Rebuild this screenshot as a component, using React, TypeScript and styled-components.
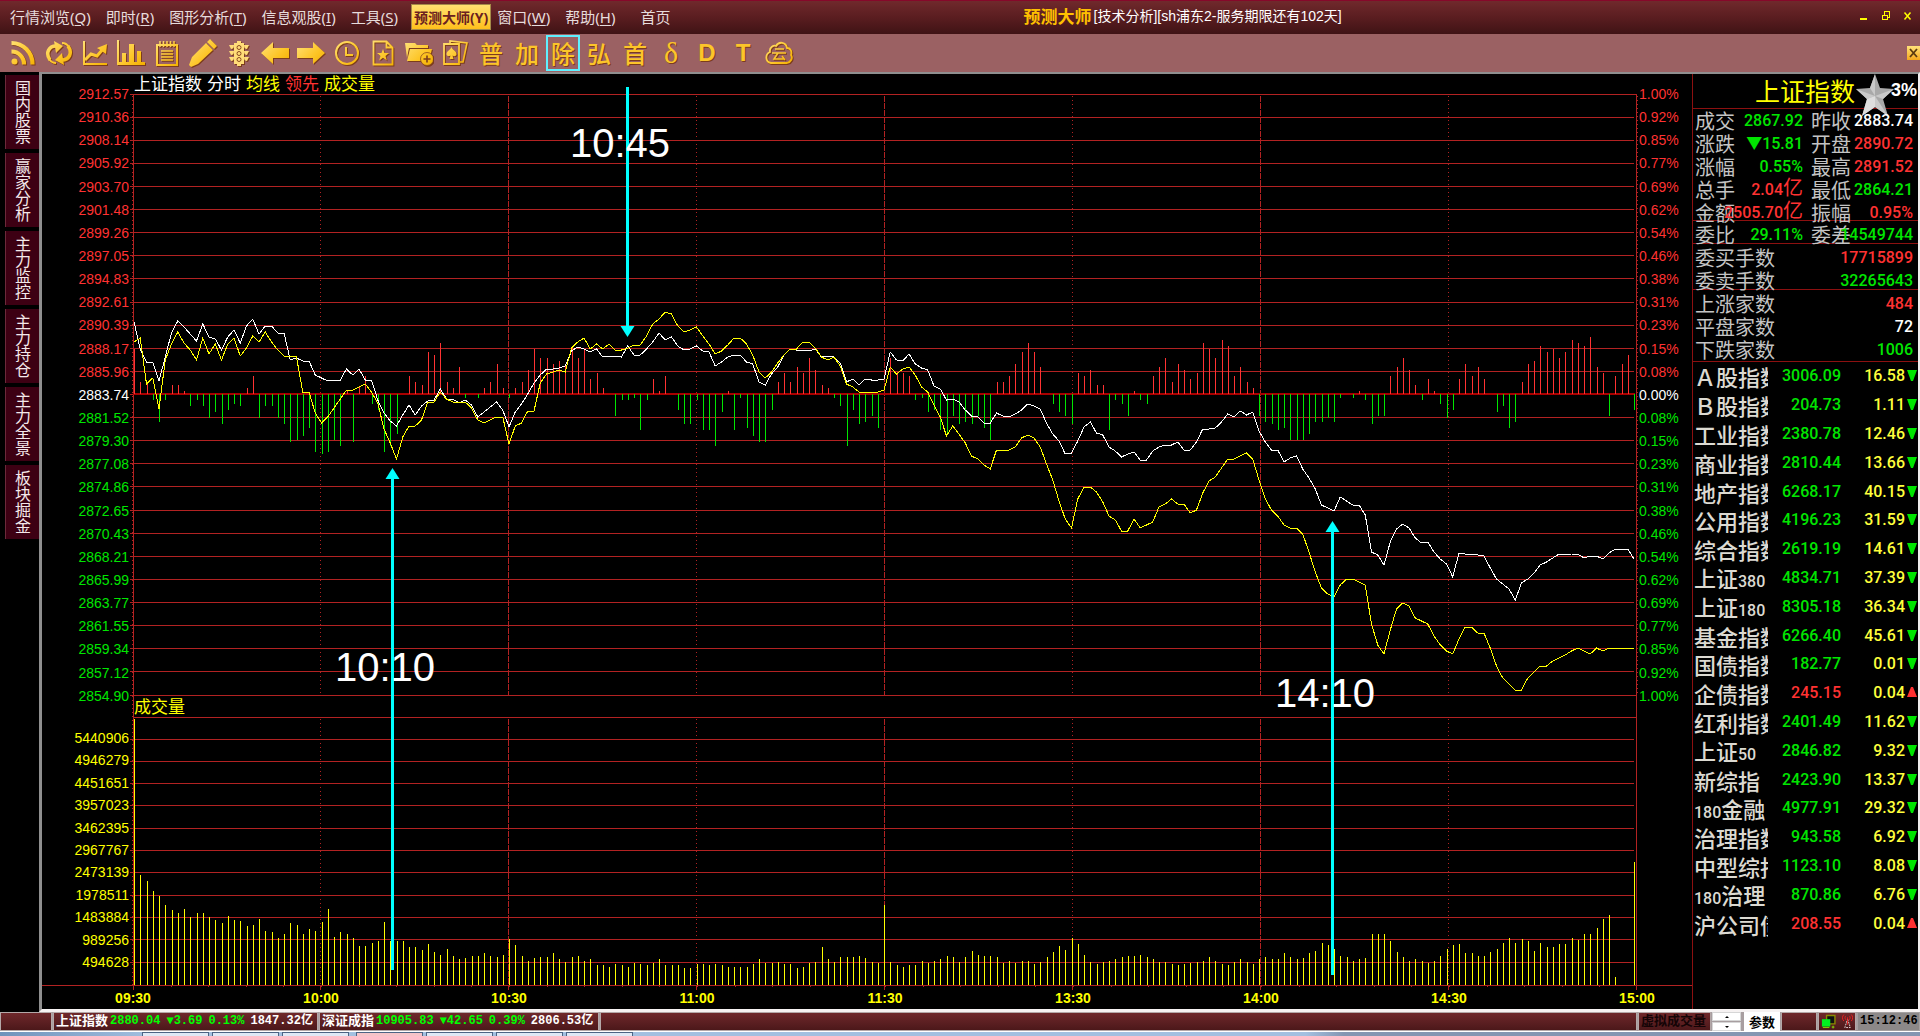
import React from 'react';
import styled, { createGlobalStyle, css } from 'styled-components';

const SANS = `"Liberation Sans", "Noto Sans CJK SC", sans-serif`;
const CJK = `"Noto Sans CJK SC", sans-serif`;
const NUM = `Roboto, "Noto Sans CJK SC", sans-serif`;
const MONO = `"Liberation Mono", "Noto Sans CJK SC", monospace`;

const RED = '#ff3232';
const GREEN = '#00e600';
const GRID = '#b22222';
const FRAME = '#8c1010';

const GlobalStyle = createGlobalStyle`
  * { box-sizing: border-box; }
  body { margin: 0; background: #000; overflow: hidden; }
  button { font: inherit; color: inherit; background: none; border: 0; padding: 0; cursor: pointer; }
  dl, dd, dt, ul, h1, h2 { margin: 0; padding: 0; font-weight: inherit; font-size: inherit; }
`;

/* ---------- data ---------- */

const OPEN_X = 134;
const STEP = 6.25;
const ZERO_Y = 394;
const PRICE_TOP = 94;
const PRICE_BOTTOM = 695;
const VOL_TOP = 717;
const VOL_BASE = 985;

const indexY = [
  322,349,362,362,381,357,333,321,327,334,341,324,337,339,350,337,330,343,326,319,334,326,326,333,333,360,358,361,361,375,
  378,381,380,380,369,375,369,380,380,400,413,421,426,415,405,415,406,401,400,389,399,399,403,400,405,417,412,407,402,410,
  427,412,404,394,383,375,369,369,368,366,351,347,349,352,349,357,356,356,357,346,355,355,349,342,333,340,337,346,350,349,
  346,351,352,366,362,357,355,355,362,364,382,385,374,367,355,349,350,350,351,349,357,356,357,363,382,379,385,379,380,380,
  379,352,360,361,354,364,368,370,386,389,400,399,402,410,416,417,423,423,413,416,417,414,410,404,406,409,423,434,441,454,
  453,441,427,422,433,435,447,451,457,454,452,460,460,451,447,445,445,442,450,450,442,429,429,428,422,414,417,411,415,412,
  431,442,450,450,462,458,456,469,478,489,505,508,511,497,501,505,505,515,552,555,565,542,529,524,528,538,543,542,552,559,
  564,577,553,554,554,555,556,568,579,584,589,600,583,579,573,565,562,558,554,555,554,554,558,556,556,559,553,549,549,549,559,
];

const leadY = [
  342,338,384,378,409,360,344,332,343,350,360,338,354,344,360,344,338,356,348,336,342,332,342,350,356,356,357,392,392,413,
  423,417,408,399,390,390,387,384,392,403,429,443,459,437,426,426,420,402,402,392,399,402,402,402,408,420,423,420,417,417,
  444,426,423,411,411,383,374,372,370,372,348,342,338,349,344,349,344,350,350,348,345,345,336,324,319,312,314,326,332,330,
  327,336,344,354,351,345,338,338,344,355,372,378,372,363,355,349,349,342,342,348,357,360,357,366,384,387,392,392,392,392,
  390,367,374,369,367,375,387,392,405,417,436,426,434,443,456,459,465,469,450,450,450,447,438,435,438,447,464,480,501,519,
  528,499,487,487,492,502,516,520,531,531,519,528,525,522,507,504,499,504,504,513,510,493,481,477,468,459,459,456,453,459,
  480,499,510,516,525,528,528,534,552,572,588,594,597,585,579,579,582,585,624,645,654,630,609,603,606,618,621,624,636,645,
  651,654,639,627,627,633,633,648,666,678,684,690,690,678,672,666,666,661,658,655,651,648,651,654,648,651,648,648,648,648,648,
];

const momentum = [
  45,12,11,-6,-28,-6,9,9,3,-12,-6,-12,-24,-18,-30,-16,-10,-12,6,18,-24,-12,-12,-24,-30,-48,-46,-42,-34,-58,
  -60,-58,-46,-52,3,-48,7,18,-10,-16,-58,-52,-40,0,18,12,9,42,39,51,12,6,27,-4,0,-4,6,12,30,6,
  -4,6,12,24,45,36,36,30,33,29,48,36,45,15,21,6,0,-22,-6,-6,-4,-36,-6,15,3,18,0,-16,-30,-30,
  -6,-36,-36,-52,-18,3,-36,-4,-34,-42,-48,-48,-16,12,21,12,27,21,36,24,9,6,-4,-12,-52,-16,-30,-28,-22,-34,
  0,36,22,21,18,-6,-4,-18,-16,-36,-40,-22,-30,-28,-30,-22,-34,-46,12,12,18,30,42,51,42,27,0,-10,-18,-22,
  -30,21,18,24,9,9,-36,-6,-10,-22,3,-6,-10,18,27,36,12,30,24,15,21,51,45,36,54,48,18,27,12,6,
  -22,-28,-30,-36,-34,-46,-46,-46,-40,-28,-28,-24,-28,-4,0,-4,3,-6,-30,-22,-22,18,27,36,24,9,-6,15,3,-10,
  -24,-16,15,30,18,27,15,0,-18,-12,-34,-28,12,30,33,48,42,45,36,42,54,51,48,57,27,21,-22,18,30,39,-16,
];

const volume = [
  266,110,104,94,89,80,75,72,76,68,72,72,68,65,62,69,65,64,59,60,66,54,53,47,51,62,60,51,56,54,
  63,76,48,53,51,47,39,39,42,44,63,44,44,44,38,38,35,41,33,30,36,29,26,27,29,29,32,29,28,30,
  46,40,29,24,27,28,28,32,26,23,28,29,24,26,20,20,18,21,20,18,22,21,20,22,26,20,20,20,17,17,
  21,21,20,21,20,18,18,18,18,21,26,22,22,23,21,21,17,18,22,23,38,26,23,28,28,28,29,27,23,22,
  80,23,20,18,20,20,24,22,24,26,29,28,23,28,34,30,29,29,28,22,24,22,24,24,21,23,28,33,39,35,
  47,41,30,23,21,23,24,26,28,29,29,30,28,26,23,23,21,20,21,22,23,24,28,24,21,20,23,26,23,21,
  26,28,26,26,32,28,26,27,32,34,42,40,36,29,28,24,26,27,51,51,51,44,33,28,24,26,24,22,24,29,
  36,40,41,32,32,29,29,33,36,42,47,42,46,44,34,42,38,38,41,41,47,45,51,51,57,66,70,8,0,0,123,
];

const prices = ['2912.57','2910.36','2908.14','2905.92','2903.70','2901.48','2899.26','2897.05','2894.83','2892.61','2890.39','2888.17','2885.96','2883.74','2881.52','2879.30','2877.08','2874.86','2872.65','2870.43','2868.21','2865.99','2863.77','2861.55','2859.34','2857.12','2854.90'];
const percents = ['1.00%','0.92%','0.85%','0.77%','0.69%','0.62%','0.54%','0.46%','0.38%','0.31%','0.23%','0.15%','0.08%','0.00%','0.08%','0.15%','0.23%','0.31%','0.38%','0.46%','0.54%','0.62%','0.69%','0.77%','0.85%','0.92%','1.00%'];
const volumes = ['5440906','4946279','4451651','3957023','3462395','2967767','2473139','1978511','1483884','989256','494628'];
const times = ['09:30','10:00','10:30','11:00','11:30','13:30','14:00','14:30','15:00'];

const notes = [
  { text: '10:45', x: 620, y: 143, arrowX: 627, tail: 87, tip: 337, dir: -1 },
  { text: '10:10', x: 385, y: 667, arrowX: 392, tail: 970, tip: 468, dir: 1 },
  { text: '14:10', x: 1325, y: 693, arrowX: 1332, tail: 975, tip: 521, dir: 1 },
];

type Tone = 'up' | 'down' | 'flat';
const toneColor: Record<Tone, string> = { up: RED, down: GREEN, flat: '#fff' };

type Quote = [label: string, value: string, tone: Tone];
const stats: Quote[][][] = [
  [
    [['成交', '2867.92', 'down'], ['昨收', '2883.74', 'flat']],
    [['涨跌', '▼15.81', 'down'], ['开盘', '2890.72', 'up']],
    [['涨幅', '0.55%', 'down'], ['最高', '2891.52', 'up']],
    [['总手', '2.04亿', 'up'], ['最低', '2864.21', 'down']],
    [['金额', '2505.70亿', 'up'], ['振幅', '0.95%', 'up']],
  ],
  [[['委比', '29.11%', 'down'], ['委差', '14549744', 'down']]],
  [[['委买手数', '17715899', 'up']], [['委卖手数', '32265643', 'down']]],
  [[['上涨家数', '484', 'up']], [['平盘家数', '72', 'flat']], [['下跌家数', '1006', 'down']]],
];

const indices: [string, string, string, boolean][] = [
  ['Ａ股指数', '3006.09', '16.58', false],
  ['Ｂ股指数', '204.73', '1.11', false],
  ['工业指数', '2380.78', '12.46', false],
  ['商业指数', '2810.44', '13.66', false],
  ['地产指数', '6268.17', '40.15', false],
  ['公用指数', '4196.23', '31.59', false],
  ['综合指数', '2619.19', '14.61', false],
  ['上证380', '4834.71', '37.39', false],
  ['上证180', '8305.18', '36.34', false],
  ['基金指数', '6266.40', '45.61', false],
  ['国债指数', '182.77', '0.01', false],
  ['企债指数', '245.15', '0.04', true],
  ['红利指数', '2401.49', '11.62', false],
  ['上证50', '2846.82', '9.32', false],
  ['新综指', '2423.90', '13.37', false],
  ['180金融', '4977.91', '29.32', false],
  ['治理指数', '943.58', '6.92', false],
  ['中型综指', '1123.10', '8.08', false],
  ['180治理', '870.86', '6.76', false],
  ['沪公司债', '208.55', '0.04', true],
];

/* ---------- title bar ---------- */

const Screen = styled.div`
  display: flex;
  flex-direction: column;
  height: 100vh;
  background: #000;
  font-family: ${SANS};
  color: #fff;
`;

const TitleBar = styled.header`
  display: grid;
  grid-template-columns: minmax(700px, 8fr) 7fr;
  align-items: center;
  flex: none;
  height: 34px;
  padding: 0 6px 4px;
  border-top: 1px solid #86082a;
  background: linear-gradient(#70292c, #5a1d20 50%, #3f1315);
`;

const Menu = styled.nav`
  display: flex;
  align-items: center;
  gap: 7px;
  padding-top: 2px;
  font-size: 15px;
  font-family: "Noto Sans", ${CJK};
  font-weight: 400;
  color: #e6dcdc;
`;

const MenuItem = styled.button<{ $active?: boolean; $apart?: boolean }>`
  height: 26px;
  padding: 0 4px;
  white-space: nowrap;
  ${p => p.$apart && css`margin-left: 10px;`}
  ${p => p.$active && css`
    margin: 0 -5px 0 2px;
    padding: 0 2px;
    border: 1px solid #a48a48;
    background: linear-gradient(#ffe070, #ffc01c);
    color: #6a2020;
    font-size: 14px;
    font-weight: 700;
  `}
`;

const AccessKey = styled.span`
  text-decoration: underline;
  text-underline-offset: 2px;
`;

const TitleSide = styled.div`
  display: flex;
  justify-content: space-between;
  align-items: center;
`;

const WindowTitle = styled.h1`
  display: flex;
  align-items: center;
  white-space: nowrap;
  font: 400 14px/20px ${SANS};
`;

const Brand = styled.span`
  font: 700 17px/20px ${CJK};
  color: #ffc000;
  margin-right: 2px;
`;

const WindowButtons = styled.div`
  display: flex;
  justify-content: flex-end;
  gap: 10px;
`;

const WindowButton = styled.button`
  width: 12px;
  height: 12px;
  display: grid;
  place-items: center;
`;

/* ---------- toolbar ---------- */

const Toolbar = styled.div`
  display: flex;
  align-items: center;
  flex: none;
  height: 38px;
  padding-left: 5px;
  background: #9b6163;
`;

const Tool = styled.button<{ $active?: boolean }>`
  display: grid;
  place-items: center;
  width: 36px;
  height: 36px;
  font: 500 24px/34px ${CJK};
  color: #fcc52a;
  text-shadow: 1px 1px 0 #7c3c1c;
  svg { filter: drop-shadow(1px 1px 0 #7c3c1c); }
  ${p => p.$active && css`
    width: 34px;
    margin: 0 1px;
    border: 2px solid #5ff0ff;
    line-height: 30px;
  `}
`;

const LatinTool = styled(Tool)`
  font: 700 24px/34px ${SANS};
`;

const GreekTool = styled(Tool)`
  font: 400 30px/34px "Liberation Serif", serif;
`;

const PanelClose = styled.button`
  margin-left: auto;
  width: 13px;
  height: 14px;
  background: linear-gradient(#ffe27a, #f5a81c);
  display: grid;
  place-items: center;
`;

/* ---------- body ---------- */

const Body = styled.main`
  display: flex;
  flex: 1;
  min-height: 0;
`;

const Sidebar = styled.nav`
  display: flex;
  flex-direction: column;
  gap: 4px;
  flex: none;
  width: 39px;
  padding: 3px 0 0 5px;
`;

const SideTab = styled.button`
  height: 74px;
  border-left: 1px solid #6b2a3a;
  background: #3d0013;
  writing-mode: vertical-rl;
  text-align: center;
  font: 400 16px/33px ${CJK};
  color: #f4e8ea;
`;

const Panels = styled.div`
  display: flex;
  flex: 1;
  min-width: 0;
  border-style: solid;
  border-width: 2px 2px 3px 3px;
  border-color: #8f8f8f #f0eeee #f6f2f2 #8f8f8f;
`;

const Chart = styled.section`
  position: relative;
  flex: 1;
  min-width: 0;
  display: grid;
  grid-template-columns: minmax(0, 91fr) minmax(0, 1504fr) minmax(0, 55fr);
  grid-template-rows: minmax(0, 20fr) minmax(0, 602fr) minmax(0, 21fr) minmax(0, 268fr) minmax(0, 24fr);
  font-size: 14px;
  line-height: 14px;
`;

const Plot = styled.svg`
  grid-area: 1 / 1 / -1 / -1;
  width: 100%;
  height: 100%;
  display: block;
`;

const Legend = styled.h2`
  grid-area: 1 / 2;
  display: flex;
  gap: 5px;
  padding-left: 1px;
  font: 400 17px/18px ${CJK};
`;

const VolumeTitle = styled.h2`
  grid-area: 3 / 2;
  padding-left: 1px;
  font: 400 17px/19px ${CJK};
  color: #ffff00;
`;

const Tint = styled.span<{ $color: string }>`
  color: ${p => p.$color};
`;

const Scale = styled.ul<{ $side: 'left' | 'right' }>`
  grid-area: 2 / ${p => (p.$side === 'left' ? 1 : 3)};
  display: flex;
  flex-direction: column;
  justify-content: space-between;
  margin: -7px 0;
  list-style: none;
  ${p => (p.$side === 'left' ? css`text-align: right; padding-right: 4px;` : css`padding-left: 2px;`)}
`;

const VolumeScale = styled(Scale)`
  grid-area: 4 / 1;
  margin: 0;
  padding: 14px 4px 16px 0;
  color: #ffff00;
`;

const TimeAxis = styled.ul`
  grid-area: 5 / 2;
  display: flex;
  justify-content: space-between;
  align-items: center;
  margin: 0 -18px;
  padding-top: 2px;
  list-style: none;
  font-weight: 700;
  color: #ffff00;
`;

const TimeMark = styled.li`
  width: 36px;
  text-align: center;
`;

const Note = styled.span`
  position: absolute;
  transform: translate(-50%, -50%);
  font-size: 40px;
  line-height: 40px;
`;

/* ---------- quote panel ---------- */

const QuotePanel = styled.aside`
  flex: none;
  width: 226px;
  border-left: 1px solid ${FRAME};
`;

const QuoteHead = styled.header`
  display: flex;
  justify-content: flex-end;
  height: 35px;
  padding-right: 1px;
  border-bottom: 1px solid ${FRAME};
`;

const QuoteName = styled.h2`
  font: 400 25px/33px ${CJK};
  color: #ffff00;
`;

const QuotePercent = styled.strong`
  margin-left: -4px;
  font-size: 18px;
  line-height: 32px;
`;

const StatGroup = styled.dl<{ $first?: boolean }>`
  padding-top: ${p => (p.$first ? 0 : 2)}px;
  border-bottom: 1px solid ${FRAME};
  &:last-of-type { padding-bottom: 3px; }
`;

const StatRows = styled.div<{ $first?: boolean }>`
  margin-bottom: ${p => (p.$first ? -4 : -3)}px;
`;

const StatRow = styled.div`
  display: flex;
  justify-content: space-between;
  height: 23px;
  padding: 0 5px 0 2px;
`;

const Stat = styled.div<{ $wide?: boolean; $second?: boolean }>`
  display: grid;
  width: ${p => (p.$wide ? '100%' : p.$second ? '102px' : '108px')};
  align-items: center;
`;

const StatLabel = styled.dt`
  grid-area: 1 / 1;
  font: 400 20px/22px ${CJK};
  color: #c4c4c4;
`;

const StatValue = styled.dd<{ $tone: Tone }>`
  grid-area: 1 / 1;
  justify-self: end;
  font: 500 16px/23px ${NUM};
  color: ${p => toneColor[p.$tone]};
`;

const Unit = styled.span`
  font-size: 20px;
  line-height: 20px;
  font-weight: 400;
`;

const IndexTable = styled.table`
  width: 100%;
  height: 576px;
  table-layout: fixed;
  border-collapse: collapse;
  font: 500 16px/24px ${NUM};
`;

const IndexRow = styled.tr`
  height: 5%;
`;

const NameCell = styled.th`
  width: 75px;
  padding: 0 0 0 1px;
  overflow: hidden;
  white-space: nowrap;
  text-align: left;
  font: 500 22px/24px ${CJK};
  color: #dcdad2;
`;

const NameDigits = styled.span`
  font: 500 16px/16px ${NUM};
`;

const NumberCell = styled.td<{ $color: string; $width: number }>`
  width: ${p => p.$width}px;
  padding: 0;
  text-align: right;
  color: ${p => p.$color};
`;

const MarkCell = styled.td`
  padding: 0 0 0 2px;
  svg { display: block; }
`;

/* ---------- status bar ---------- */

const StatusBar = styled.footer`
  display: flex;
  flex: none;
  height: 19px;
  gap: 1px;
  background: #a89ea0;
  font: 700 12px/17px ${MONO};
`;

const StatusCell = styled.div<{ $width?: number }>`
  display: flex;
  align-items: center;
  gap: 6px;
  flex: ${p => (p.$width ? `0 0 ${p.$width}px` : '1 1 0')};
  padding: 0 2px;
  border: 1px solid #b4a8a8;
  background: linear-gradient(#6f282b, #4c181a);
  white-space: nowrap;
  overflow: hidden;
`;

const StatusName = styled.span`
  font-size: 13px;
  margin-right: -4px;
`;

const VirtualVolume = styled(StatusCell)`
  color: #140406;
  font-size: 13px;
`;

const Spinner = styled.div`
  display: flex;
  flex-direction: column;
  gap: 1px;
  width: 29px;
`;

const SpinButton = styled.button`
  flex: 1;
  display: grid;
  place-items: center;
  background: #fff;
  border: 1px solid #d6d6d6;
`;

const ParamButton = styled.button`
  width: 36px;
  margin-left: 2px;
  background: #fff;
  color: #000;
  font: 700 13px/17px ${CJK};
`;

const Clock = styled.time`
  width: 63px;
  padding-left: 2px;
  border: 1px solid #a4a0a0;
  background: #8c8888;
  color: #000;
`;

const Taskbar = styled.div`
  display: flex;
  gap: 3px;
  flex: none;
  height: 5px;
  padding-left: 142px;
  border-top: 1px solid #fff;
  background: linear-gradient(90deg, #6f93bb, #a3c0e0 8%, #a3c0e0 68%, #8496b2 70%, #8496b2);
`;

const TaskTab = styled.span<{ $hot?: boolean; $gap?: boolean }>`
  width: 67px;
  margin-left: ${p => (p.$gap ? 4 : 0)}px;
  border: 1px solid #4c6484;
  border-bottom: 0;
  background: ${p => (p.$hot ? '#f6c4c8' : '#dfe9f6')};
`;

/* ---------- drawings ---------- */

const HiddenDefs = styled.svg`
  position: absolute;
`;

const Gold = () => (
  <HiddenDefs width="0" height="0" aria-hidden="true">
    <defs>
      <linearGradient id="gold" x1="0" y1="0" x2="26" y2="26" gradientUnits="userSpaceOnUse">
        <stop offset="0" stopColor="#ffe27a" />
        <stop offset=".6" stopColor="#fdc526" />
        <stop offset="1" stopColor="#f2ae00" />
      </linearGradient>
    </defs>
  </HiddenDefs>
);

const G = 'url(#gold)';

const icons: [string, React.ReactNode][] = [
  ['资讯', <>
    <circle cx="4.5" cy="21.5" r="3" fill={G} />
    <path d="M1.5 11.5A12.5 12.5 0 0 1 14 24.500M1.500 3A21 21 0 0 1 22.500 24.500" fill="none" stroke={G} strokeWidth="4.200" />
  </>],
  ['刷新', <>
    <path d="M4 20C-1 13 3 6 10 6M22 6c5 7 1 14-6 14" fill="none" stroke={G} strokeWidth="3.500" />
    <path d="M8 1l9 5-7 7zM18 25l-9-5 7-7z" fill={G} />
    <path d="M16 3c3 0 5 1 7 4M10 23c-3 0-5-1-7-4" fill="none" stroke={G} strokeWidth="2" />
  </>],
  ['走势', <>
    <path d="M2 1v23h23" fill="none" stroke={G} strokeWidth="2" />
    <path d="M3 20l6-6 6 2 6-7" fill="none" stroke={G} strokeWidth="3" />
    <path d="M25 4l-1 10-9-6z" fill={G} />
  </>],
  ['柱图', <path d="M-1 0h2v22h3v-9h4v9h3V4h5v18h3V11h4v11h4v3H-1z" fill={G} />],
  ['记事', <>
    <path d="M3 5h20v20H3z" fill="none" stroke={G} strokeWidth="2" />
    <path d="M6 1v6M9.500 1v6M13 1v6M16.500 1v6M20 1v6M7 11h12M7 14h12M7 17h12M7 20h12" stroke={G} strokeWidth="1.500" />
  </>],
  ['画线', <path d="M17 2l3-3 7 7-3 3zM16 3l7 7L8 24l-7 3-2-2 3-8z" fill={G} />],
  ['信号', <>
    <path d="M8 3h10v21H8zM11 1h4v2h-4zM11 24h4v2h-4zM3 5h5c0 3-1 4-3 4zM3 11h5c0 3-1 4-3 4zM3 17h5c0 3-1 4-3 4zM23 5h-5c0 3 1 4 3 4zM23 11h-5c0 3 1 4 3 4zM23 17h-5c0 3 1 4 3 4z" fill="#ffdc78" />
    <circle cx="13" cy="7.500" r="2" fill="none" stroke="#8a4a20" />
    <circle cx="13" cy="13.500" r="2" fill="none" stroke="#8a4a20" />
    <circle cx="13" cy="19.500" r="2" fill="none" stroke="#8a4a20" />
  </>],
  ['后退', <path d="M-1 13L11 2v6h16v10H11v6z" fill={G} />],
  ['前进', <path d="M27 13L15 2v6H-1v10h16v6z" fill={G} />],
  ['周期', <>
    <circle cx="13" cy="13" r="11" fill="none" stroke={G} strokeWidth="2" />
    <path d="M12 7v8h7" fill="none" stroke={G} strokeWidth="2" />
  </>],
  ['自选', <>
    <path d="M3.500 1.500h13l6 6v17h-19zM16.500 1.500v6h6" fill="none" stroke={G} strokeWidth="1.800" />
    <path d="M13 9l1.500 4h4.500l-3.500 3 1.300 4.500-3.800-2.700-3.800 2.700 1.300-4.500L7 13h4.500z" fill={G} />
  </>],
  ['板块', <>
    <path d="M-1 3h10l2 2h11v3H3L1 18z" fill={G} />
    <path d="M4 9h22l-3 12H1z" fill={G} />
    <circle cx="21" cy="19" r="6.500" fill={G} stroke="#8a4a20" strokeWidth=".8" />
    <path d="M21 15.500v7M17.500 19h7" stroke="#7c3c1c" strokeWidth="1.600" />
  </>],
  ['牌组', <>
    <path d="M8 3V1l17 2-4 19h-3" fill="none" stroke={G} strokeWidth="1.600" />
    <path d="M2 4h15v20H2z" fill="none" stroke={G} strokeWidth="1.800" />
    <path d="M9.500 7c1 3 5 4 5 7 0 2-2 3-4 1.500l1 3.500H7.500l1-3.500C6.500 17 4.500 16 4.500 14c0-3 4-4 5-7z" fill={G} />
  </>],
];

const CloudIcon = () => (
  <svg width="28" height="26" viewBox="0 0 28 26" aria-hidden="true">
    <path d="M6 23c-6-1-6-9-1-11-1-5 4-7 6-6 3-5 10-4 11 2 4 0 5 4 4 7 2 3 0 7-4 8z" fill="none" stroke={G} strokeWidth="1.800" />
    <path d="M10 9h9M7 13h14M13 13l-4 6h10M17 16l3 4" fill="none" stroke={G} strokeWidth="1.500" />
  </svg>
);

const StarIcon = () => (
  <svg width="40" height="42" viewBox="0 0 40 42" aria-hidden="true">
    <path d="M20 0l5 14 14 1-11 10 5 17-13-9-13 9 5-17L1 15l14-1z" fill="#a9a9a9" />
    <path d="M20 0v22L15 14zM39 15L20 22l8 3zM33 42L20 22v11zM1 15l19 7-8 3z" fill="#c9c9c9" />
    <path d="M20 22l-8 3-5 17 13-9z" fill="#dedede" />
  </svg>
);

const polyline = (ys: number[]) => ys.map((y, i) => `${OPEN_X + i * STEP},${y}`).join(' ');
const bars = (list: number[], keep: (v: number) => boolean, base: number) =>
  list.map((v, i) => (keep(v) ? `M${Math.round(OPEN_X + i * STEP) + 0.5} ${base}V${base - v}` : '')).join('');

const rowY = (i: number) => Math.floor(PRICE_TOP + (i * (PRICE_BOTTOM - PRICE_TOP)) / 26) + 0.5;
const volY = (i: number) => Math.floor(739 + i * 22.3) + 0.5;
const timeX = (i: number) => Math.floor(133 + i * 187.9) + 0.5;

function PlotArea() {
  const rows = prices.map((_, i) => `M130 ${rowY(i)}H${i === 0 || i === 26 ? 1636 : 1634}`).join('');
  const volRows = volumes.map((_, i) => `M130 ${volY(i)}H1634`).join('');
  const column = (i: number) => `M${timeX(i)} 96V695M${timeX(i)} 719V984`;
  const minor = Array.from({ length: 40 }, (_, i) => `M${Math.round(133 + i * 37.6) + 0.5} 985v2`).join('');
  const major = times.map((_, i) => `M${timeX(i)} 985v5`).join('');
  return (
    <Plot viewBox="42 74 1650 935" preserveAspectRatio="none" shapeRendering="crispEdges" fill="none" role="img" aria-label="上证指数分时走势">
      <path d={rows + volRows} stroke={GRID} />
      <path d={`M133 ${VOL_TOP + 0.5}H1636M42 ${VOL_BASE + 0.5}H1692M133.5 94V985M1636.5 94V985`} stroke={GRID} />
      <path d="M132.5 96V985M1637.5 96V696" stroke={GRID} strokeDasharray="1 3" />
      <path d={[1, 3, 5, 7].map(column).join('')} stroke={GRID} strokeDasharray="1 3" />
      <path d={[2, 4, 6].map(column).join('')} stroke={GRID} strokeDasharray="6 1" />
      <path d={minor + major} stroke={GRID} />
      <path d={`M133 ${ZERO_Y}H1635`} stroke="#a80000" strokeWidth="2" />
      <path d={bars(momentum, v => v > 0, ZERO_Y)} stroke={RED} />
      <path d={bars(momentum, v => v < 0, ZERO_Y)} stroke={GREEN} />
      <path d={bars(volume, v => v > 0, VOL_BASE)} stroke="#ffff00" />
      <polyline points={polyline(indexY)} stroke="#ffffff" />
      <polyline points={polyline(leadY)} stroke="#ffff00" />
      {notes.map(n => (
        <g key={n.text} shapeRendering="auto">
          <path d={`M${n.arrowX + 0.5} ${n.tail}V${n.tip + n.dir * 8}`} stroke="#00ffff" strokeWidth="3" />
          <path d={`M${n.arrowX + 0.5} ${n.tip}l7 ${n.dir * 11}h-14z`} fill="#00ffff" />
        </g>
      ))}
    </Plot>
  );
}

const scaleColor = (i: number) => (i < 13 ? RED : i === 13 ? '#fff' : GREEN);

function SplitName({ name }: { name: string }) {
  return <>{name.split(/(\d+)/).map((part, i) => (/\d/.test(part) ? <NameDigits key={i}>{part}</NameDigits> : part))}</>;
}

const menu: [string, string][] = [['行情浏览', 'Q'], ['即时', 'R'], ['图形分析', 'T'], ['信息观股', 'I'], ['工具', 'S'], ['预测大师', 'Y'], ['窗口', 'W'], ['帮助', 'H']];

export default function App() {
  return (
    <Screen>
      <GlobalStyle />
      <Gold />
      <TitleBar>
        <Menu>
          {menu.map(([label, key]) => (
            <MenuItem key={key} $active={key === 'Y'}>
              {label}({key === 'Y' ? key : <AccessKey>{key}</AccessKey>})
            </MenuItem>
          ))}
          <MenuItem $apart>首页</MenuItem>
        </Menu>
        <TitleSide>
          <WindowTitle><Brand>预测大师</Brand>[技术分析][sh浦东2-服务期限还有102天]</WindowTitle>
          <WindowButtons>
            <WindowButton aria-label="最小化"><svg width="10" height="10"><path d="M1 7h7v2H1z" fill="#ff0" /></svg></WindowButton>
            <WindowButton aria-label="还原"><svg width="10" height="10" shapeRendering="crispEdges"><path d="M3 .5h5.500v5.500H7M1.500 4h5v4.500h-5zM3 1v3" fill="none" stroke="#ff0" /></svg></WindowButton>
            <WindowButton aria-label="关闭"><svg width="10" height="10"><path d="M1.500 1.500l6 7M7.500 1.500l-6 7" stroke="#ff0" strokeWidth="1.500" /></svg></WindowButton>
          </WindowButtons>
        </TitleSide>
      </TitleBar>

      <Toolbar role="toolbar">
        {icons.map(([label, art]) => (
          <Tool key={label} aria-label={label}>
            <svg width="28" height="28" viewBox="-1 -1 28 28" aria-hidden="true">{art}</svg>
          </Tool>
        ))}
        {['普', '加', '除', '弘', '首'].map(t => <Tool key={t} $active={t === '除'}>{t}</Tool>)}
        <GreekTool>δ</GreekTool>
        <LatinTool>D</LatinTool>
        <LatinTool>T</LatinTool>
        <Tool aria-label="云"><CloudIcon /></Tool>
        <PanelClose aria-label="关闭面板"><svg width="11" height="12"><path d="M2 2l7 8M9 2l-7 8" stroke="#5a3a10" strokeWidth="1.800" /></svg></PanelClose>
      </Toolbar>

      <Body>
        <Sidebar>
          {['国内股票', '赢家分析', '主力监控', '主力持仓', '主力全景', '板块掘金'].map(t => <SideTab key={t}>{t}</SideTab>)}
        </Sidebar>
        <Panels>
          <Chart>
            <PlotArea />
            <Legend>
              <span>上证指数</span>
              <span>分时</span>
              <Tint $color="#ffff00">均线</Tint>
              <Tint $color={RED}>领先</Tint>
              <Tint $color="#ffff00">成交量</Tint>
            </Legend>
            <Scale $side="left">{prices.map((p, i) => <li key={i}><Tint $color={scaleColor(i)}>{p}</Tint></li>)}</Scale>
            <Scale $side="right">{percents.map((p, i) => <li key={i}><Tint $color={scaleColor(i)}>{p}</Tint></li>)}</Scale>
            <VolumeTitle>成交量</VolumeTitle>
            <VolumeScale $side="left">{volumes.map(v => <li key={v}>{v}</li>)}</VolumeScale>
            <TimeAxis>{times.map(t => <TimeMark key={t}>{t}</TimeMark>)}</TimeAxis>
            {notes.map(n => (
              <Note key={n.text} style={{ left: `${((n.x - 42) / 1650) * 100}%`, top: `${((n.y - 74) / 935) * 100}%` }}>{n.text}</Note>
            ))}
          </Chart>

          <QuotePanel>
            <QuoteHead>
              <QuoteName>上证指数</QuoteName>
              <StarIcon />
              <QuotePercent>3%</QuotePercent>
            </QuoteHead>
            {stats.map((group, g) => (
              <StatGroup key={g} $first={g === 0}>
                <StatRows $first={g === 0}>
                  {group.map((row, r) => (
                    <StatRow key={r}>
                      {row.map(([label, value, tone], c) => (
                        <Stat key={label} $wide={row.length === 1} $second={c === 1}>
                          <StatLabel>{label}</StatLabel>
                          <StatValue $tone={tone}>
                            {value.replace('亿', '')}{value.endsWith('亿') && <Unit>亿</Unit>}
                          </StatValue>
                        </Stat>
                      ))}
                    </StatRow>
                  ))}
                </StatRows>
              </StatGroup>
            ))}
            <IndexTable>
              <tbody>
                {indices.map(([name, value, change, up]) => (
                  <IndexRow key={name}>
                    <NameCell scope="row"><SplitName name={name} /></NameCell>
                    <NumberCell $width={73} $color={up ? RED : GREEN}>{value}</NumberCell>
                    <NumberCell $width={64} $color="#ffff3c">{change}</NumberCell>
                    <MarkCell>
                      <svg width="10" height="12" viewBox="0 0 10 12" aria-label={up ? '上涨' : '下跌'}>
                        {up ? <path d="M4 0h2l4 10H0z" fill={RED} /> : <path d="M0 0h10L6 11H4z" fill={GREEN} />}
                      </svg>
                    </MarkCell>
                  </IndexRow>
                ))}
              </tbody>
            </IndexTable>
          </QuotePanel>
        </Panels>
      </Body>

      <StatusBar>
        <StatusCell $width={52} />
        <StatusCell $width={265}>
          <StatusName>上证指数</StatusName>
          <Tint $color="#00ff00">2880.04</Tint>
          <Tint $color="#00ff00">▼3.69</Tint>
          <Tint $color="#00ff00">0.13%</Tint>
          <span>1847.32亿</span>
        </StatusCell>
        <StatusCell $width={280}>
          <StatusName>深证成指</StatusName>
          <Tint $color="#00ff00">10905.83</Tint>
          <Tint $color="#00ff00">▼42.65</Tint>
          <Tint $color="#00ff00">0.39%</Tint>
          <span>2806.53亿</span>
        </StatusCell>
        <StatusCell />
        <VirtualVolume $width={73}>虚拟成交量</VirtualVolume>
        <Spinner>
          <SpinButton aria-label="增加"><svg width="4" height="2"><path d="M2 0l2 2H0z" fill="#000" /></svg></SpinButton>
          <SpinButton aria-label="减少"><svg width="4" height="2"><path d="M0 0h4L2 2z" fill="#000" /></svg></SpinButton>
        </Spinner>
        <ParamButton>参数</ParamButton>
        <StatusCell $width={36} />
        <StatusCell $width={38}>
          <svg width="16" height="15" viewBox="0 0 16 15" aria-label="网络">
            <path d="M6 1h9v9H6z" fill="#101010" stroke="#8a8a00" strokeWidth="1.500" />
            <path d="M1 5h9v8H1z" fill="#00f020" />
            <path d="M2 14h7M13 12v3M11.500 13.500h3" stroke="#8ae000" />
          </svg>
          <svg width="12" height="15" viewBox="0 0 12 15" aria-label="信号">
            <path d="M6 5l3 9H3z" fill="none" stroke="#e8d8d8" strokeDasharray="2 1" />
            <path d="M2 0c-2 2-2 5 0 7M10 0c2 2 2 5 0 7M4 1.500c-1 1-1 3 0 4M8 1.500c1 1 1 3 0 4M6 3v8" fill="none" stroke="#f02020" />
          </svg>
        </StatusCell>
        <Clock>15:12:46</Clock>
      </StatusBar>
      <Taskbar>
        {[0, 1, 2, 3, 4, 5, 6].map(i => <TaskTab key={i} $hot={i === 3} $gap={i === 3} />)}
      </Taskbar>
    </Screen>
  );
}
